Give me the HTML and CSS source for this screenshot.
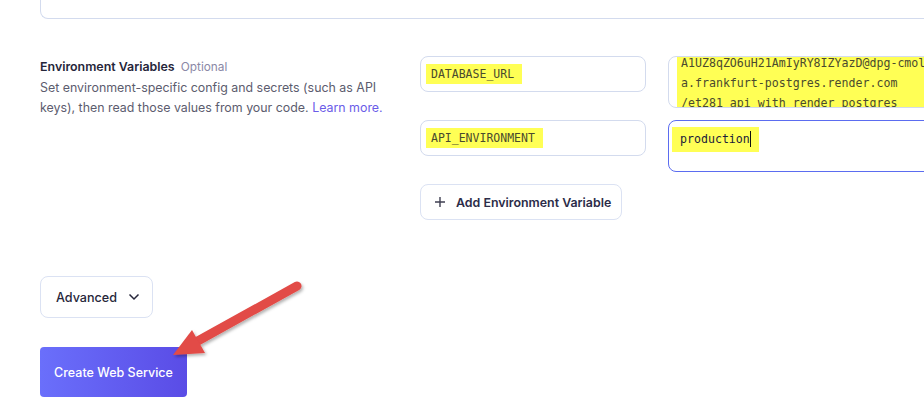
FILE: index.html
```html
<!DOCTYPE html>
<html>
<head>
<meta charset="utf-8">
<link rel="stylesheet" href="styles.css">
</head>
<body>
<div class="page">
  <div class="top-card"></div>
  <section class="env">
    <div class="env-info">
      <div class="env-title">Environment Variables <span class="optional">Optional</span></div>
      <p class="env-desc">Set environment-specific config and secrets (such as API keys), then read those values from your code. <a class="learn">Learn more.</a></p>
    </div>
    <div class="env-fields">
      <div class="grid">
        <div class="key"><span class="hl">DATABASE_URL</span></div>
        <div class="value scrolled"><div class="hl-block"><div class="vline">A1UZ8qZO6uH21AmIyRY8IZYazD@dpg-cmoli</div><div class="vline">a.frankfurt-postgres.render.com</div><div class="vline"><span class="spell">/et281_api_with_render_postgres</span></div></div></div>
        <div class="key"><span class="hl">API_ENVIRONMENT</span></div>
        <div class="value focused"><span class="hl prod">production</span><span class="caret"></span></div>
      </div>
      <button class="add-btn"><svg width="12" height="12" viewBox="0 0 12 12"><path d="M6 1v10M1 6h10" stroke="#3f3f52" stroke-width="1.4" fill="none"/></svg><span>Add Environment Variable</span></button>
    </div>
  </section>
  <button class="adv-btn">Advanced <svg width="12" height="8" viewBox="0 0 12 8"><path d="M1.5 1.5l4.5 4.5 4.5-4.5" stroke="#26263a" stroke-width="1.5" fill="none"/></svg></button>
  <button class="create-btn">Create Web Service</button>
</div>
<svg class="arrow" width="924" height="416" viewBox="0 0 924 416">
  <defs>
    <filter id="sh" x="-20%" y="-20%" width="140%" height="140%"><feDropShadow dx="1.5" dy="2" stdDeviation="1.5" flood-color="#000" flood-opacity="0.3"/></filter>
  </defs>
  <g filter="url(#sh)">
    <line x1="297" y1="286" x2="196" y2="342" stroke="#e24b46" stroke-width="9" stroke-linecap="round"/>
    <polygon points="173,355 192,330 205,353" fill="#e24b46"/>
  </g>
</svg>
</body>
</html>
```
FILE: styles.css
```css
html, body { margin: 0; padding: 0; background: #fff; }
body { font-family: Inter, "Noto Sans", sans-serif; color: #26263a; width: 924px; height: 416px; overflow: hidden; position: relative; }
.page { padding-left: 40px; }
.top-card { height: 18px; margin-right: -40px; border: 1px solid #d3dbee; border-top: none; border-right: none; border-radius: 0 0 0 8px; }
.env { display: flex; margin-top: 37px; }
.env-info { width: 350px; flex: none; margin-right: 30px; padding-top: 2px; }
.env-title { font-size: 12.4px; font-weight: 600; color: #26263a; line-height: 18px; }
.optional { font-weight: 400; font-size: 11.8px; color: #8a88a6; margin-left: 3px; }
.env-desc { margin: 2px 0 0; font-size: 12.4px; line-height: 20px; color: #5c5c6e; }
.learn { color: #6a5ce8; }
.env-fields { flex: 1; }
.grid { display: grid; grid-template-columns: 226px 1fr; column-gap: 22px; row-gap: 12px; align-items: start; margin-right: -40px; }
.key { height: 36px; box-sizing: border-box; border: 1px solid #d3dbee; border-radius: 8px; display: flex; align-items: center; padding-left: 5px; font-family: "DejaVu Sans Mono", monospace; font-size: 11.5px; color: #4a4a2e; }
.hl { background: #ffff55; padding: 4px 8px 4px 5px; line-height: 12px; }
.value { height: 52px; box-sizing: border-box; border: 1px solid #d3dbee; border-radius: 8px; font-family: "DejaVu Sans Mono", monospace; font-size: 11.6px; overflow: hidden; color: #4a4a2e; }
.scrolled { padding: 0 0 0 8px; }
.hl-block { background: #ffff55; margin-top: -4px; padding-left: 4px; height: 62px; }
.vline { line-height: 20px; white-space: nowrap; }
.spell { text-decoration: underline dashed #d23a3a; text-underline-offset: 3px; }
.focused { border: 1px solid #5b6cf0; padding: 6px 0 0 3px; }
.prod { display: inline-block; padding: 6px 9px 7px 8px; color: #1b1b3a; line-height: 12px; }
.caret { display: inline-block; width: 1px; height: 16px; background: #111; vertical-align: middle; margin-left: -9px; position: relative; top: -1px; }
.add-btn { margin-top: 12px; height: 36px; width: 202px; box-sizing: border-box; border: 1px solid #dbe2f3; border-radius: 8px; background: #fff; font-family: Inter, sans-serif; font-size: 12.4px; font-weight: 600; color: #2c2c48; display: flex; align-items: center; gap: 10px; padding: 0 0 0 13px; }
.adv-btn { margin-top: 56px; display: flex; align-items: center; gap: 11px; height: 42px; width: 113px; box-sizing: border-box; border: 1px solid #dbe2f3; border-radius: 8px; background: #fff; font-family: Inter, sans-serif; font-size: 12.6px; font-weight: 500; color: #26263a; padding: 0 0 0 15px; }
.create-btn { display: block; margin-top: 29px; height: 50px; width: 147px; border: none; border-radius: 4px; background: linear-gradient(90deg, #6a6ffb, #5a4ce6); color: #fff; font-family: Inter, sans-serif; font-size: 12.5px; font-weight: 500; padding: 0; }
.arrow { position: absolute; left: 0; top: 0; pointer-events: none; }
```
